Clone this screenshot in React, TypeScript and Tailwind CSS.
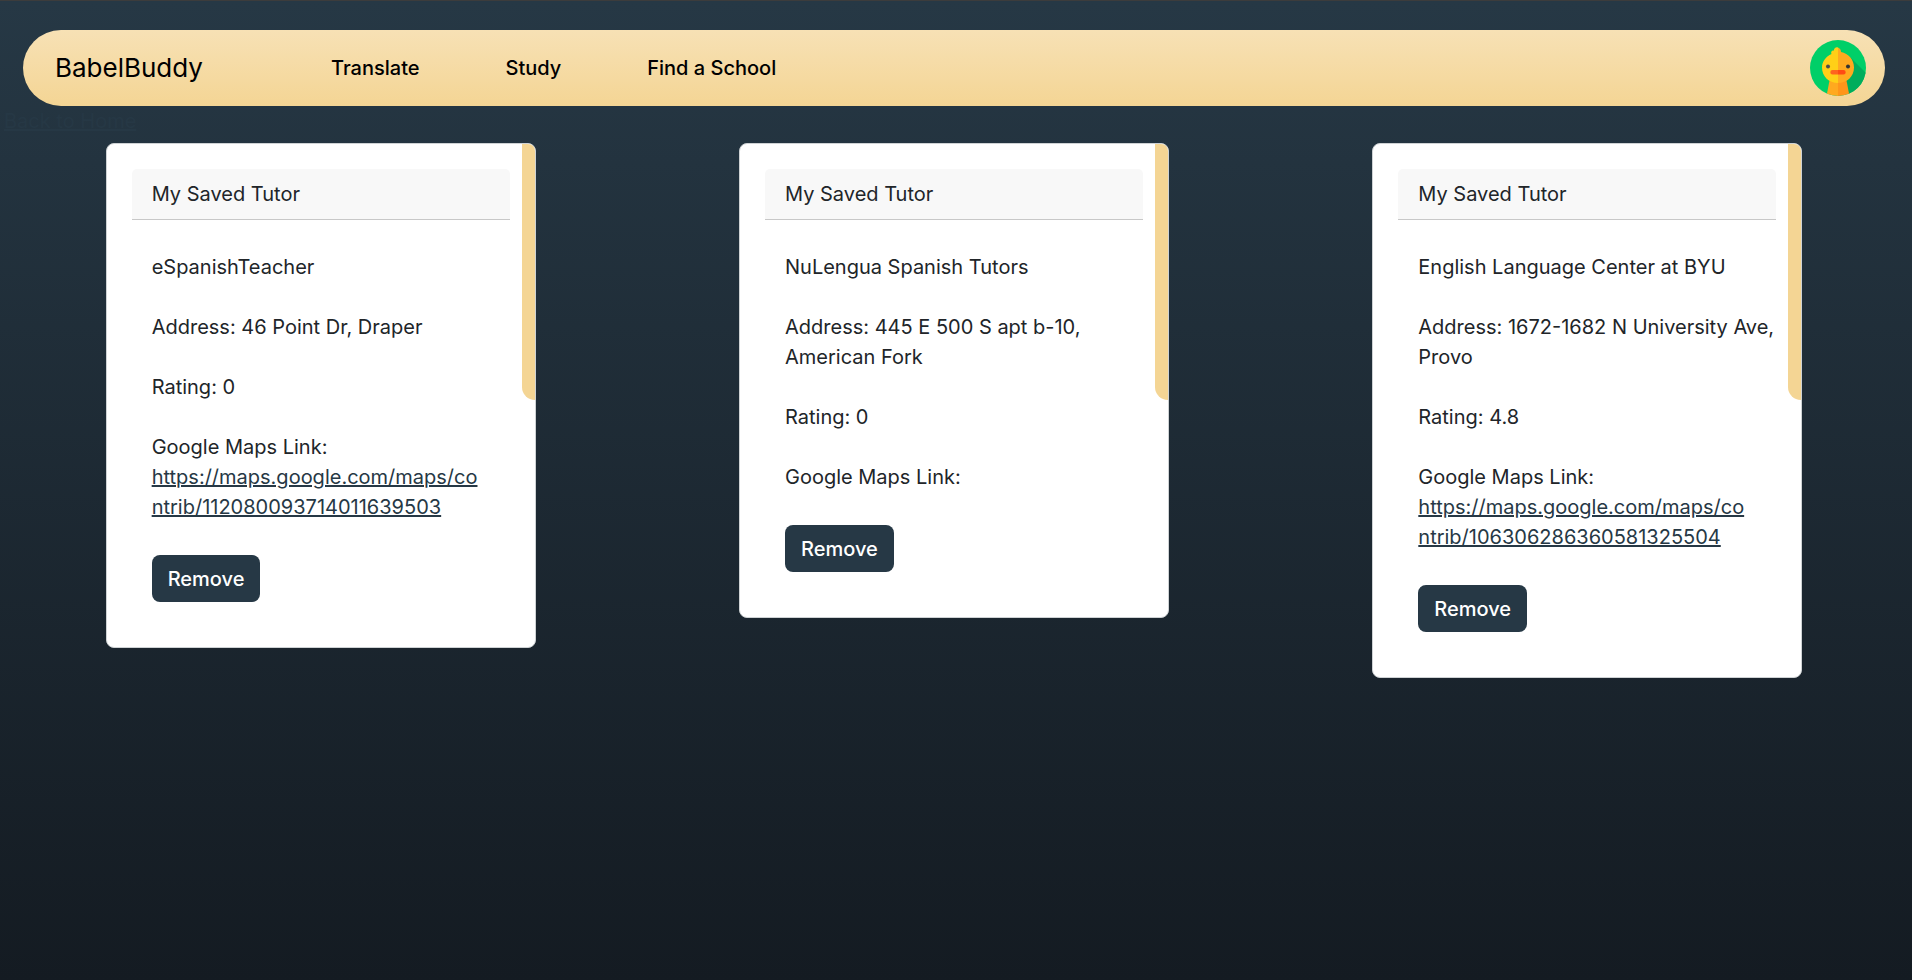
type Tutor = { name: string; address: string; rating: string; link?: string[] };

const tutors: Tutor[] = [
  {
    name: "eSpanishTeacher",
    address: "46 Point Dr, Draper",
    rating: "0",
    link: ["https://maps.google.com/maps/co", "ntrib/112080093714011639503"],
  },
  { name: "NuLengua Spanish Tutors", address: "445 E 500 S apt b-10, American Fork", rating: "0" },
  {
    name: "English Language Center at BYU",
    address: "1672-1682 N University Ave, Provo",
    rating: "4.8",
    link: ["https://maps.google.com/maps/co", "ntrib/106306286360581325504"],
  },
];

function Avatar() {
  return (
    <svg viewBox="0 0 56 56" className="size-14" aria-hidden="true">
      <defs>
        <clipPath id="avatar-circle">
          <circle cx="28" cy="28" r="28" />
        </clipPath>
      </defs>
      <g clipPath="url(#avatar-circle)">
        <rect width="56" height="56" fill="#00cf68" />
        <path d="M40 17 L58 35 V58 H38 L34 40 Z" fill="#00ad5c" />
        <path d="M20 38 L16.5 56 H28 V38 Z" fill="#ffa91f" />
        <path d="M28 38 V56 H39.500 L36 38 Z" fill="#ff951a" />
        <path d="M28 7.500 C26.500 6.500 23.500 8 24 10.500 C21.500 10 20.500 12.500 21.500 14 C16 16.500 12 21.500 12 27.500 C12 36.500 19 43 28 43 Z" fill="#ffcf17" />
        <path d="M28 7.500 C30.500 8.500 31 10.500 31 12 C38.500 13.500 44 19.500 44 27.500 C44 36.500 37 43 28 43 Z" fill="#ffa91f" />
        <circle cx="18" cy="26.500" r="2" fill="#4d4d4d" />
        <circle cx="38" cy="26.500" r="2" fill="#333333" />
        <path d="M28 30 H22.500 a2.200 2.200 0 0 0 0 4.400 H28 Z" fill="#ff641f" />
        <path d="M28 30 H33.500 a2.200 2.200 0 0 1 0 4.400 H28 Z" fill="#ff4b14" />
      </g>
    </svg>
  );
}

function TutorCard({ tutor }: { tutor: Tutor }) {
  return (
    <article className="relative w-full max-w-[430px] overflow-hidden rounded-lg border border-[#ced2d4] bg-white p-[25px]">
      <div className="absolute top-0 right-0 h-64 w-[13px] rounded-bl-[13px] bg-[#f4d594]" />
      <h2 className="rounded-t-[5px] border-b border-[#c8c8c8] bg-[#f8f8f8] px-5 py-[10px]">My Saved Tutor</h2>
      <div className="-mr-8 flex flex-col items-start gap-[30px] px-5 pt-8 pb-5">
        <p>{tutor.name}</p>
        <p>{`Address: ${tutor.address}`}</p>
        <p>{`Rating: ${tutor.rating}`}</p>
        <p className="whitespace-nowrap">
          Google Maps Link:
          {tutor.link && (
            <>
              <br />
              <a href={tutor.link.join("")} className="text-[#263845] underline">
                {tutor.link[0]}
                <br />
                {tutor.link[1]}
              </a>
            </>
          )}
        </p>
        <button type="button" className="mt-[3px] h-[47px] rounded-lg bg-[#263845] px-4 font-medium text-white">
          Remove
        </button>
      </div>
    </article>
  );
}

export default function App() {
  return (
    <div className="min-h-screen border-t border-[#3c3c3c] bg-linear-to-b from-[#263845] to-[#141b22] pt-[29px] pr-2 pl-1 font-['Inter','Open_Sans',sans-serif] text-[20px] leading-[30px] font-normal text-[#212529]">
      <nav className="mx-[19px] flex h-[76px] items-center rounded-full bg-linear-to-b from-[#f7e1b5] to-[#f4d594] pr-[19px] pl-8 text-black">
        <a href="#" className="w-[276px] text-[26px]">
          BabelBuddy
        </a>
        <div className="flex grow gap-[86px] font-medium">
          <a href="#translate">Translate</a>
          <a href="#study">Study</a>
          <a href="#schools">Find a School</a>
        </div>
        <a href="#profile" aria-label="Profile">
          <Avatar />
        </a>
      </nav>
      <a href="#home" className="block h-[37px] w-fit text-[#263845] underline">
        Back to Home
      </a>
      <main className="grid grid-cols-3 items-start justify-items-center">
        {tutors.map((tutor) => (
          <TutorCard key={tutor.name} tutor={tutor} />
        ))}
      </main>
    </div>
  );
}
